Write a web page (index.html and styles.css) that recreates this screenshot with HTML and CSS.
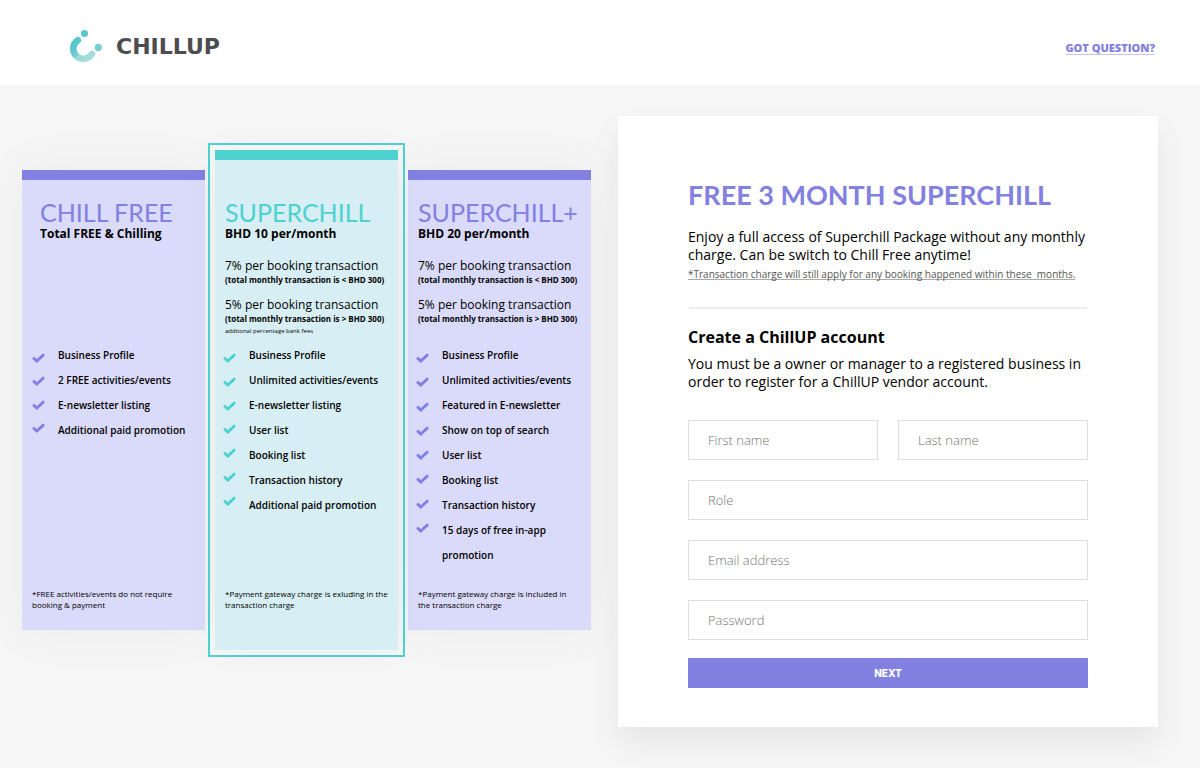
FILE: index.html
```html
<!DOCTYPE html>
<html lang="en">
<head>
<meta charset="utf-8">
<meta name="viewport" content="width=device-width, initial-scale=1">
<title>ChillUP – Free 3 Month Superchill</title>
<link rel="stylesheet" href="styles.css">
</head>
<body>
<svg class="defs" aria-hidden="true">
  <symbol id="tick" viewBox="0 0 13 10"><path d="M1.9 5.4 4.8 8 11.2 2.1" fill="none" stroke="currentColor" stroke-width="2.8" stroke-linecap="round" stroke-linejoin="miter"/></symbol>
</svg>
<header class="header">
  <a class="logo" href="#">
    <svg class="logo-mark" viewBox="0 0 34 34" aria-hidden="true">
      <defs>
        <linearGradient id="arc" gradientUnits="userSpaceOnUse" x1="5" y1="11" x2="24" y2="28">
          <stop offset="0" stop-color="#54c5c8"/><stop offset=".4" stop-color="#66cacc"/><stop offset=".6" stop-color="#9bd9da"/><stop offset="1" stop-color="#a9dddd"/>
        </linearGradient>
      </defs>
      <path d="M9.900 11.200A10.100 10.100 0 1 0 24 24.900" fill="none" stroke="url(#arc)" stroke-width="6.600" stroke-linecap="round"/>
      <circle cx="16.500" cy="4.500" r="3.600" fill="#5cc8cb"/>
      <circle cx="30.300" cy="18.400" r="3.600" fill="#7ccdd2"/>
    </svg>
    <span class="logo-text">CHILLUP</span>
  </a>
  <a class="help" href="#">GOT QUESTION?</a>
</header>

<main class="main">
  <section class="plans" aria-label="Plans">
    <article class="plan plan-free">
      <h2 class="plan-name">CHILL FREE</h2>
      <p class="plan-price">Total FREE &amp; Chilling</p>
      <div class="rates"></div>
      <div class="features">
        <div class="ticks" aria-hidden="true">
          <svg><use href="#tick"/></svg><svg><use href="#tick"/></svg><svg><use href="#tick"/></svg><svg><use href="#tick"/></svg>
        </div>
        <ul class="list">
          <li>Business Profile</li>
          <li>2 FREE activities/events</li>
          <li>E-newsletter listing</li>
          <li>Additional paid promotion</li>
        </ul>
      </div>
      <p class="footnote">*FREE activities/events do not require booking &amp; payment</p>
    </article>

    <div class="frame">
      <article class="plan plan-super">
        <h2 class="plan-name">SUPERCHILL</h2>
        <p class="plan-price">BHD 10 per/month</p>
        <div class="rates">
          <p class="rate">7% per booking transaction</p>
          <p class="rate-note">(total monthly transaction is &lt; BHD 300)</p>
          <p class="rate">5% per booking transaction</p>
          <p class="rate-note">(total monthly transaction is &gt; BHD 300)</p>
          <p class="fees">addtional percentage bank fees</p>
        </div>
        <div class="features">
          <div class="ticks" aria-hidden="true">
            <svg><use href="#tick"/></svg><svg><use href="#tick"/></svg><svg><use href="#tick"/></svg><svg><use href="#tick"/></svg><svg><use href="#tick"/></svg><svg><use href="#tick"/></svg><svg><use href="#tick"/></svg>
          </div>
          <ul class="list">
            <li>Business Profile</li>
            <li>Unlimited activities/events</li>
            <li>E-newsletter listing</li>
            <li>User list</li>
            <li>Booking list</li>
            <li>Transaction history</li>
            <li>Additional paid promotion</li>
          </ul>
        </div>
        <p class="footnote">*Payment gateway charge is exluding in the transaction charge</p>
      </article>
    </div>

    <article class="plan plan-plus">
      <h2 class="plan-name">SUPERCHILL+</h2>
      <p class="plan-price">BHD 20 per/month</p>
      <div class="rates">
        <p class="rate">7% per booking transaction</p>
        <p class="rate-note">(total monthly transaction is &lt; BHD 300)</p>
        <p class="rate">5% per booking transaction</p>
        <p class="rate-note">(total monthly transaction is &gt; BHD 300)</p>
      </div>
      <div class="features">
        <div class="ticks" aria-hidden="true">
          <svg><use href="#tick"/></svg><svg><use href="#tick"/></svg><svg><use href="#tick"/></svg><svg><use href="#tick"/></svg><svg><use href="#tick"/></svg><svg><use href="#tick"/></svg><svg><use href="#tick"/></svg><svg><use href="#tick"/></svg>
        </div>
        <ul class="list">
          <li>Business Profile</li>
          <li>Unlimited activities/events</li>
          <li>Featured in E-newsletter</li>
          <li>Show on top of search</li>
          <li>User list</li>
          <li>Booking list</li>
          <li>Transaction history</li>
          <li>15 days of free in-app promotion</li>
        </ul>
      </div>
      <p class="footnote">*Payment gateway charge is included in the transaction charge</p>
    </article>
  </section>

  <section class="panel">
    <h1 class="panel-title">FREE 3 MONTH SUPERCHILL</h1>
    <p class="text">Enjoy a full access of Superchill Package without any monthly charge. Can be switch to Chill Free anytime!</p>
    <p class="terms">*Transaction charge will still apply for any booking happened within these&nbsp; months.</p>
    <hr class="rule">
    <h2 class="form-title">Create a ChillUP account</h2>
    <p class="text">You must be a owner or manager to a registered business in order to register for a ChillUP vendor account.</p>
    <form class="form">
      <div class="names">
        <input class="field" type="text" placeholder="First name" aria-label="First name">
        <input class="field" type="text" placeholder="Last name" aria-label="Last name">
      </div>
      <input class="field" type="text" placeholder="Role" aria-label="Role">
      <input class="field" type="email" placeholder="Email address" aria-label="Email address">
      <input class="field" type="password" placeholder="Password" aria-label="Password">
      <button class="next" type="submit">NEXT</button>
    </form>
  </section>
</main>
</body>
</html>
```
FILE: styles.css
```css
* { box-sizing: border-box; }
body, h1, h2, p, ul { margin: 0; padding: 0; }
body {
  min-height: 100vh;
  background: #f6f6f6;
  color: #000;
  font-family: "Open Sans", "Noto Sans", sans-serif;
}
.defs { display: none; }

.header {
  display: flex;
  align-items: center;
  justify-content: space-between;
  height: 85px;
  padding: 0 45px 0 68px;
  background: #fff;
}
.logo {
  display: flex;
  align-items: center;
  gap: 14px;
  padding-top: 7px;
  color: #4d4d4f;
  text-decoration: none;
}
.logo-mark { width: 34px; height: 34px; }
.logo-text {
  padding-top: 2px;
  font: bold 22px/26px "DejaVu Sans", sans-serif;
}
.help {
  padding-top: 11px;
  color: #8280e0;
  font: 800 11px/14px "Open Sans", sans-serif;
  text-decoration-thickness: 1px;
  text-decoration-color: #c5c4f0;
  text-underline-offset: 2px;
}

.main {
  display: grid;
  grid-template-columns: 569fr 540fr;
  align-items: start;
  gap: 27px;
  padding: 31px 42px 41px 22px;
}

.plans {
  display: grid;
  grid-template-columns: 183fr 197fr 183fr;
  align-items: center;
  gap: 3px;
  margin-top: 27px;
}
.frame {
  z-index: 1;
  padding: 5px;
  border: 2px solid #4dd2cf;
}
.plan {
  --accent: #8280e0;
  display: flex;
  flex-direction: column;
  min-height: 460px;
  padding: 19px 0 20px;
  border-top: 10px solid var(--accent);
  background: #dadafa;
  box-shadow: 0 0 50px rgba(0, 0, 0, .05);
}
.plan-super {
  --accent: #4dd2cf;
  min-height: 500px;
  padding: 39px 0 40px;
  background: #d7eff4;
  box-shadow: 0 0 40px rgba(0, 0, 0, .03);
}
.plan-name {
  padding-left: 10px;
  color: var(--accent);
  font: 400 25px/27px Lato, sans-serif;
  white-space: nowrap;
}
.plan-price {
  padding-left: 10px;
  font-size: 12px;
  font-weight: 700;
  line-height: 16px;
}
.plan-free .plan-name, .plan-free .plan-price { padding-left: 18px; }
.rates {
  min-height: 101px;
  padding: 16px 0 0 10px;
  white-space: nowrap;
}
.rate { font-size: 12px; line-height: 16px; }
.rate-note { font-size: 8px; font-weight: 700; line-height: 11px; }
.rate-note + .rate { margin-top: 12px; }
.fees { font-size: 6px; line-height: 14px; }

.features {
  display: flex;
  gap: 13px;
  padding-left: 8px;
}
.plan-free .features { padding-left: 10px; }
.ticks {
  display: flex;
  flex-direction: column;
  justify-content: space-between;
  padding: 10px 0 12px;
  color: var(--accent);
}
.plan-free .ticks { padding-bottom: 10px; }
.plan-plus .ticks { padding-bottom: 35px; }
.ticks svg { display: block; width: 13px; height: 10px; }
.list {
  flex: 1;
  list-style: none;
  padding-right: 8px;
  font-size: 10px;
  font-weight: 600;
  line-height: 25px;
}
.footnote {
  margin-top: auto;
  padding: 0 8px 0 10px;
  font-size: 8px;
  line-height: 11px;
}
.plan-plus .footnote { padding-right: 20px; }

.panel {
  padding: 62px 70px 39px;
  background: #fff;
  box-shadow: 0 16px 30px rgba(0, 0, 0, .07);
}
.panel-title {
  margin-bottom: 16px;
  color: #8280e0;
  font: 700 27px/34px Lato, sans-serif;
  white-space: nowrap;
}
.text { font-size: 14px; line-height: 18px; }
.terms {
  margin-top: 3px;
  color: #555;
  font-size: 10px;
  line-height: 14px;
  text-decoration: underline 1px #aaa;
  text-decoration-skip-ink: none;
  text-underline-offset: 1px;
  white-space: nowrap;
}
.rule {
  height: 2px;
  margin: 26px 1px 18px;
  border: 0;
  background: #ececec;
}
.form-title {
  margin-bottom: 8px;
  font-size: 16px;
  font-weight: 700;
  line-height: 20px;
}
.form {
  display: grid;
  gap: 20px;
  margin-top: 29px;
}
.names {
  display: grid;
  grid-template-columns: 1fr 1fr;
  gap: 20px;
}
.field {
  width: 100%;
  height: 40px;
  padding: 0 19px;
  border: 1px solid #dedede;
  border-radius: 0;
  background: #fff;
  color: #000;
  font: 300 13px "Open Sans", sans-serif;
}
.field::placeholder { color: #747474; opacity: 1; }
.next {
  height: 30px;
  margin-top: -2px;
  padding: 0;
  border: 0;
  background: #8280e0;
  color: #fff;
  font: 800 10px Inter, sans-serif;
}
```
